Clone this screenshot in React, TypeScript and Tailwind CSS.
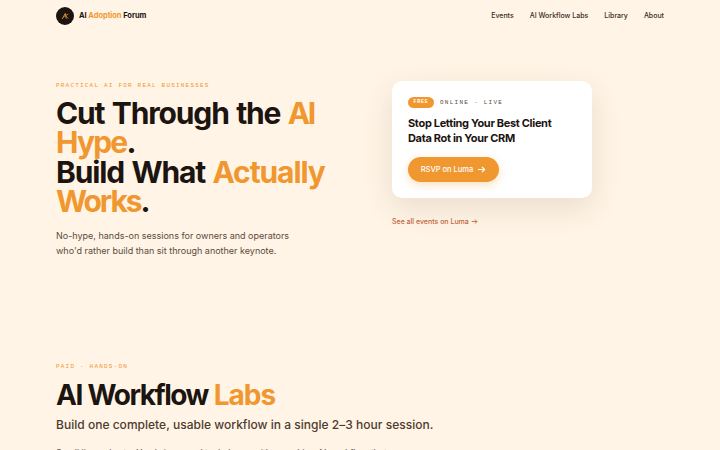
const NAV = ['Events', 'AI Workflow Labs', 'Library', 'About']

function Logo() {
    return (
        <div className="flex items-center gap-[5px]">
            <span className="size-[18px] rounded-full bg-[#1c1410] flex items-center justify-center">
                <svg viewBox="0 0 18 18" className="size-[18px]" fill="none" stroke="#d98a35" strokeLinecap="round">
                    <path d="M6.4 11.6 9.3 6.4 10.2 11.2" strokeWidth="1" />
                    <path d="M7.6 9.8 12 7.2M10.2 9.2 12 11.2" strokeWidth="0.8" />
                </svg>
            </span>
            <span className="text-[7.5px] font-bold tracking-[-0.05px]">
                AI <span className="text-[#f0972f]">Adoption</span> Forum
            </span>
        </div>
    )
}

function Arrow({ className }: { className: string }) {
    return (
        <svg viewBox="0 0 16 16" className={className} fill="none" stroke="currentColor" strokeWidth="2" strokeLinecap="round" strokeLinejoin="round">
            <path d="M2.5 8h11M9.5 4 13.5 8 9.5 12" />
        </svg>
    )
}

function EventCard() {
    return (
        <div className="w-[200px] h-[117.5px] rounded-[10px] bg-white px-4 pt-4 shadow-[0_10px_30px_rgba(92,58,30,0.12)]">
            <div className="flex items-center gap-1.5 font-['Liberation_Mono',monospace]">
                <span className="w-[26px] h-[11.5px] rounded-full bg-[#f0972f] text-white text-[5px] font-bold tracking-[0.8px] flex items-center justify-center">FREE</span>
                <span className="text-[6px] leading-[12px] tracking-[1.26px] text-[#5c4a3d]">ONLINE · LIVE</span>
            </div>
            <h2 className="mt-[7px] text-[11px] leading-[15px] font-bold tracking-[-0.33px] whitespace-nowrap">
                Stop Letting Your Best Client
                <br />
                Data Rot in Your CRM
            </h2>
            <a className="mt-[11.5px] w-[91px] h-[25px] rounded-full bg-[#f0972f] text-white text-[7.5px] font-medium flex items-center justify-center gap-1 shadow-[0_3px_8px_rgba(240,151,47,0.3)]">
                RSVP on Luma
                <Arrow className="size-[9px]" />
            </a>
        </div>
    )
}

export default function App() {
    return (
        <div className="h-[450px] overflow-hidden bg-[#fff4e6] text-[#1c1410] font-[Inter,sans-serif]">
            <header className="h-8 px-14 flex items-center justify-between">
                <Logo />
                <nav className="flex gap-4 text-[7px] font-medium text-[#3d2b1f]">
                    {NAV.map((item) => (
                        <a key={item}>{item}</a>
                    ))}
                </nav>
            </header>

            <section className="h-[330px] px-14 pt-[48.5px] flex">
                <div className="w-[336px] shrink-0 whitespace-nowrap">
                    <p className="h-[10px] font-['Liberation_Mono',monospace] text-[6px] leading-[10px] tracking-[1.2px] text-[#f0972f]">
                        PRACTICAL AI FOR REAL BUSINESSES
                    </p>
                    <h1 className="mt-[8px] text-[30px] leading-[29.5px] font-bold tracking-[-1.15px] [word-spacing:1.5px]">
                        Cut Through the <span className="text-[#f0972f] tracking-[-2.5px]">AI</span>
                        <br />
                        <span className="text-[#f0972f] tracking-[-1.8px]">Hype</span>.
                        <br />
                        Build What <span className="text-[#f0972f] tracking-[-1.1px]">Actually</span>
                        <br />
                        <span className="text-[#f0972f] tracking-[-2.1px]">Works</span>.
                    </h1>
                    <p className="mt-[11.5px] text-[9px] leading-[15px] text-[#5c4a3d]">
                        No-hype, hands-on sessions for owners and operators
                        <br />
                        who'd rather build than sit through another keynote.
                    </p>
                </div>
                <div>
                    <EventCard />
                    <a className="mt-[18.5px] flex items-center gap-[2px] text-[7px] leading-[10px] font-medium text-[#c0653a]">
                        See all events on Luma
                        <Arrow className="size-[7px]" />
                    </a>
                </div>
            </section>

            <section className="px-14 whitespace-nowrap">
                <p className="font-['Liberation_Mono',monospace] text-[6px] leading-[10px] tracking-[1.2px] text-[#f0972f]">PAID · HANDS-ON</p>
                <h2 className="mt-[8px] text-[28px] leading-[30px] font-bold tracking-[-1.5px] [word-spacing:0.7px]">
                    AI Workflow <span className="text-[#f0972f] tracking-[-1px]">Labs</span>
                </h2>
                <p className="mt-[7px] text-[12px] leading-[16px] font-medium tracking-[0.02px] text-[#4f3b2e]">
                    Build one complete, usable workflow in a single 2–3 hour session.
                </p>
                <p className="mt-[13px] text-[9px] leading-[14px] text-[#5c4a3d]">
                    Small live cohorts. You bring a real task, leave with a working AI workflow that
                </p>
            </section>
        </div>
    )
}
